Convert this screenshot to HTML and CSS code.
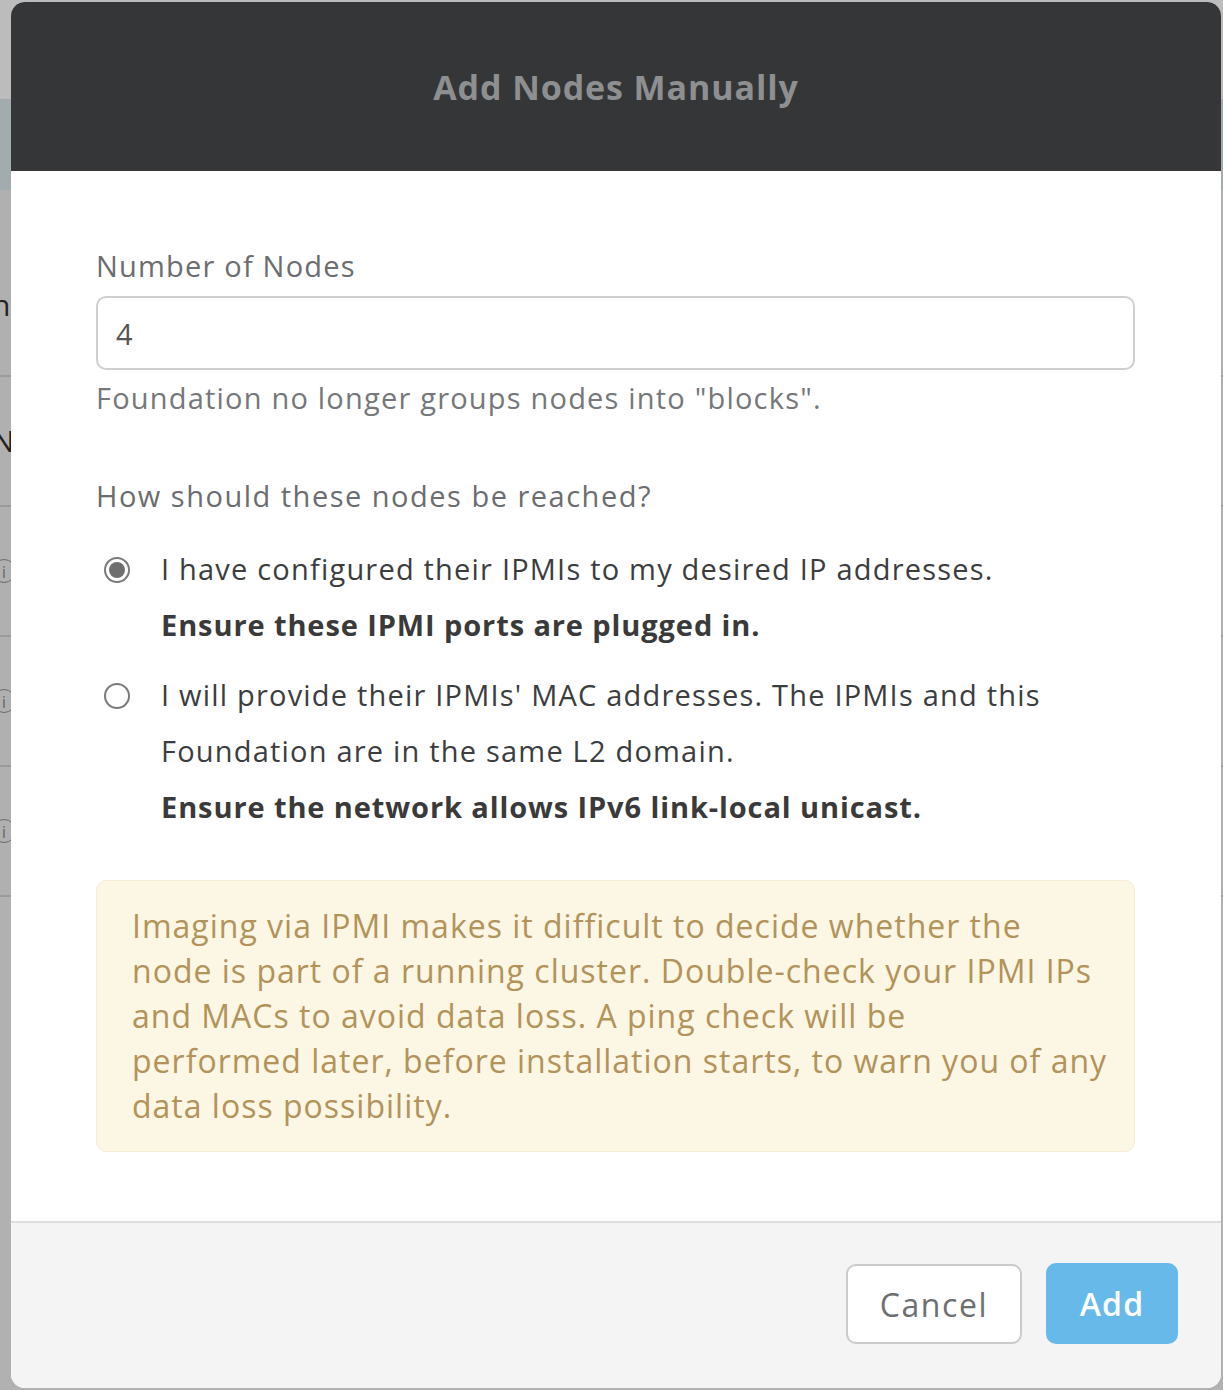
FILE: index.html
```html
<!DOCTYPE html>
<html lang="en">
<head>
<meta charset="utf-8">
<title>Add Nodes Manually</title>
<link rel="stylesheet" href="styles.css">
</head>
<body>
<div class="page">
  <div class="page-top"></div>
  <div class="page-band"></div>
  <div class="page-row page-row-first"><span class="frag">n</span></div>
  <div class="page-row"><span class="frag">N</span></div>
  <div class="page-row"><span class="info">i</span></div>
  <div class="page-row"><span class="info">i</span></div>
  <div class="page-row"><span class="info">i</span></div>
  <div class="page-rest"></div>
</div>

<div class="modal">
  <div class="modal-header">
    <h1 class="modal-title">Add Nodes Manually</h1>
  </div>
  <div class="modal-body">
    <label class="field-label" for="nodes">Number of Nodes</label>
    <input class="field-input" id="nodes" type="text" value="4">
    <p class="help">Foundation no longer groups nodes into "blocks".</p>

    <p class="question">How should these nodes be reached?</p>

    <div class="option">
      <span class="radio checked"></span>
      <div class="option-text">
        <div>I have configured their IPMIs to my desired IP addresses.</div>
        <div class="strong">Ensure these IPMI ports are plugged in.</div>
      </div>
    </div>
    <div class="option option-2">
      <span class="radio"></span>
      <div class="option-text">
        <div>I will provide their IPMIs' MAC addresses. The IPMIs and this Foundation are in the same L2 domain.</div>
        <div class="strong">Ensure the network allows IPv6 link-local unicast.</div>
      </div>
    </div>

    <div class="warning">Imaging via IPMI makes it difficult to decide whether the<br>node is part of a running cluster. Double-check your IPMI IPs<br>and MACs to avoid data loss. A ping check will be<br>performed later, before installation starts, to warn you of any<br>data loss possibility.</div>
  </div>
  <div class="modal-footer">
    <button class="btn btn-cancel" type="button">Cancel</button>
    <button class="btn btn-add" type="button">Add</button>
  </div>
</div>
</body>
</html>
```

FILE: styles.css
```css
* { box-sizing: border-box; }

html, body {
  margin: 0;
  padding: 0;
}

body {
  width: 1223px;
  height: 1390px;
  overflow: hidden;
  position: relative;
  background: #b1b1b1;
  font-family: "Open Sans", "Liberation Sans", sans-serif;
}

/* background page (dimmed) */
.page {
  display: flex;
  flex-direction: column;
}
.page-top { height: 99px; background: #bcbcbc; }
.page-band { height: 91px; background: #a2abae; }
.page-row {
  height: 130px;
  border-bottom: 2px solid #9a9a9a;
  display: flex;
  align-items: center;
  background: #b0b0b0;
}
.page-row-first {
  height: 187px;
  align-items: flex-start;
  padding-top: 95px;
}
.frag {
  font-size: 30px;
  line-height: 40px;
  color: #222;
  margin-left: -8px;
}
.info {
  flex: none;
  width: 24px;
  height: 24px;
  border: 1.5px solid #6a6a6a;
  border-radius: 50%;
  margin-left: -8px;
  font-size: 17px;
  color: #6a6a6a;
  display: flex;
  align-items: center;
  justify-content: center;
}
.page-rest { flex: 1; }

/* modal */
.modal {
  position: absolute;
  top: 2px;
  left: 11px;
  width: 1210px;
  height: 1386px;
  border-radius: 14px;
  overflow: hidden;
  background: #fff;
  display: flex;
  flex-direction: column;
}

.modal-header {
  height: 169px;
  background: #353638;
  display: flex;
  align-items: center;
  justify-content: center;
}
.modal-title {
  margin: 0;
  font-size: 34px;
  font-weight: 700;
  color: #8e8f91;
  letter-spacing: 0.9px;
}

.modal-body {
  flex: 1;
  padding: 75px 86px 0 85px;
  display: flex;
  flex-direction: column;
  color: #6b6d70;
  font-size: 29px;
  letter-spacing: 1.2px;
}

.field-label {
  line-height: 40px;
  color: #6b6d70;
}
.field-input {
  margin-top: 10px;
  height: 74px;
  width: 100%;
  border: 2px solid #cfcfcf;
  border-radius: 10px;
  padding: 0 18px;
  font-family: inherit;
  font-size: 29px;
  color: #555;
  background: #fff;
  outline: none;
}
.help {
  margin: 8px 0 0;
  line-height: 40px;
  color: #75777a;
}
.question {
  margin: 58px 0 0;
  line-height: 40px;
  color: #6b6d70;
  letter-spacing: 1.5px;
}

.option {
  display: flex;
  margin-top: 25px;
  line-height: 56px;
  color: #3c3d3f;
}
.option-2 { margin-top: 14px; }

.radio {
  flex: none;
  width: 26px;
  height: 26px;
  margin: 16px 0 0 8px;
  border: 2px solid #7a7a7a;
  border-radius: 50%;
  display: flex;
  align-items: center;
  justify-content: center;
}
.radio.checked::after {
  content: "";
  width: 16px;
  height: 16px;
  border-radius: 50%;
  background: #6f6f6f;
}
.option-text {
  margin-left: 31px;
  flex: 1;
}
.strong {
  font-weight: 700;
  color: #3a3a3a;
  letter-spacing: 0.9px;
}

.warning {
  margin-top: 45px;
  background: #fcf6e5;
  border: 1px solid #f6ecd4;
  border-radius: 10px;
  padding: 22px 30px 23px 35px;
  font-size: 32px;
  line-height: 45px;
  letter-spacing: 1px;
  color: #b2935a;
  white-space: nowrap;
}

.modal-footer {
  height: 167px;
  border-top: 2px solid #dedede;
  background: #f4f4f4;
  display: flex;
  justify-content: flex-end;
  align-items: flex-start;
  padding: 40px 43px 0 0;
  gap: 24px;
}
.btn {
  height: 81px;
  border-radius: 10px;
  font-family: inherit;
  font-size: 32px;
  cursor: pointer;
}
.btn-cancel {
  width: 176px;
  margin-top: 1px;
  height: 80px;
  background: #fff;
  border: 2px solid #cbcbcb;
  color: #6d6f71;
  letter-spacing: 1.6px;
}
.btn-add {
  width: 132px;
  background: #67b9ea;
  border: none;
  color: #fff;
  font-weight: 600;
  letter-spacing: 1.2px;
}
```
